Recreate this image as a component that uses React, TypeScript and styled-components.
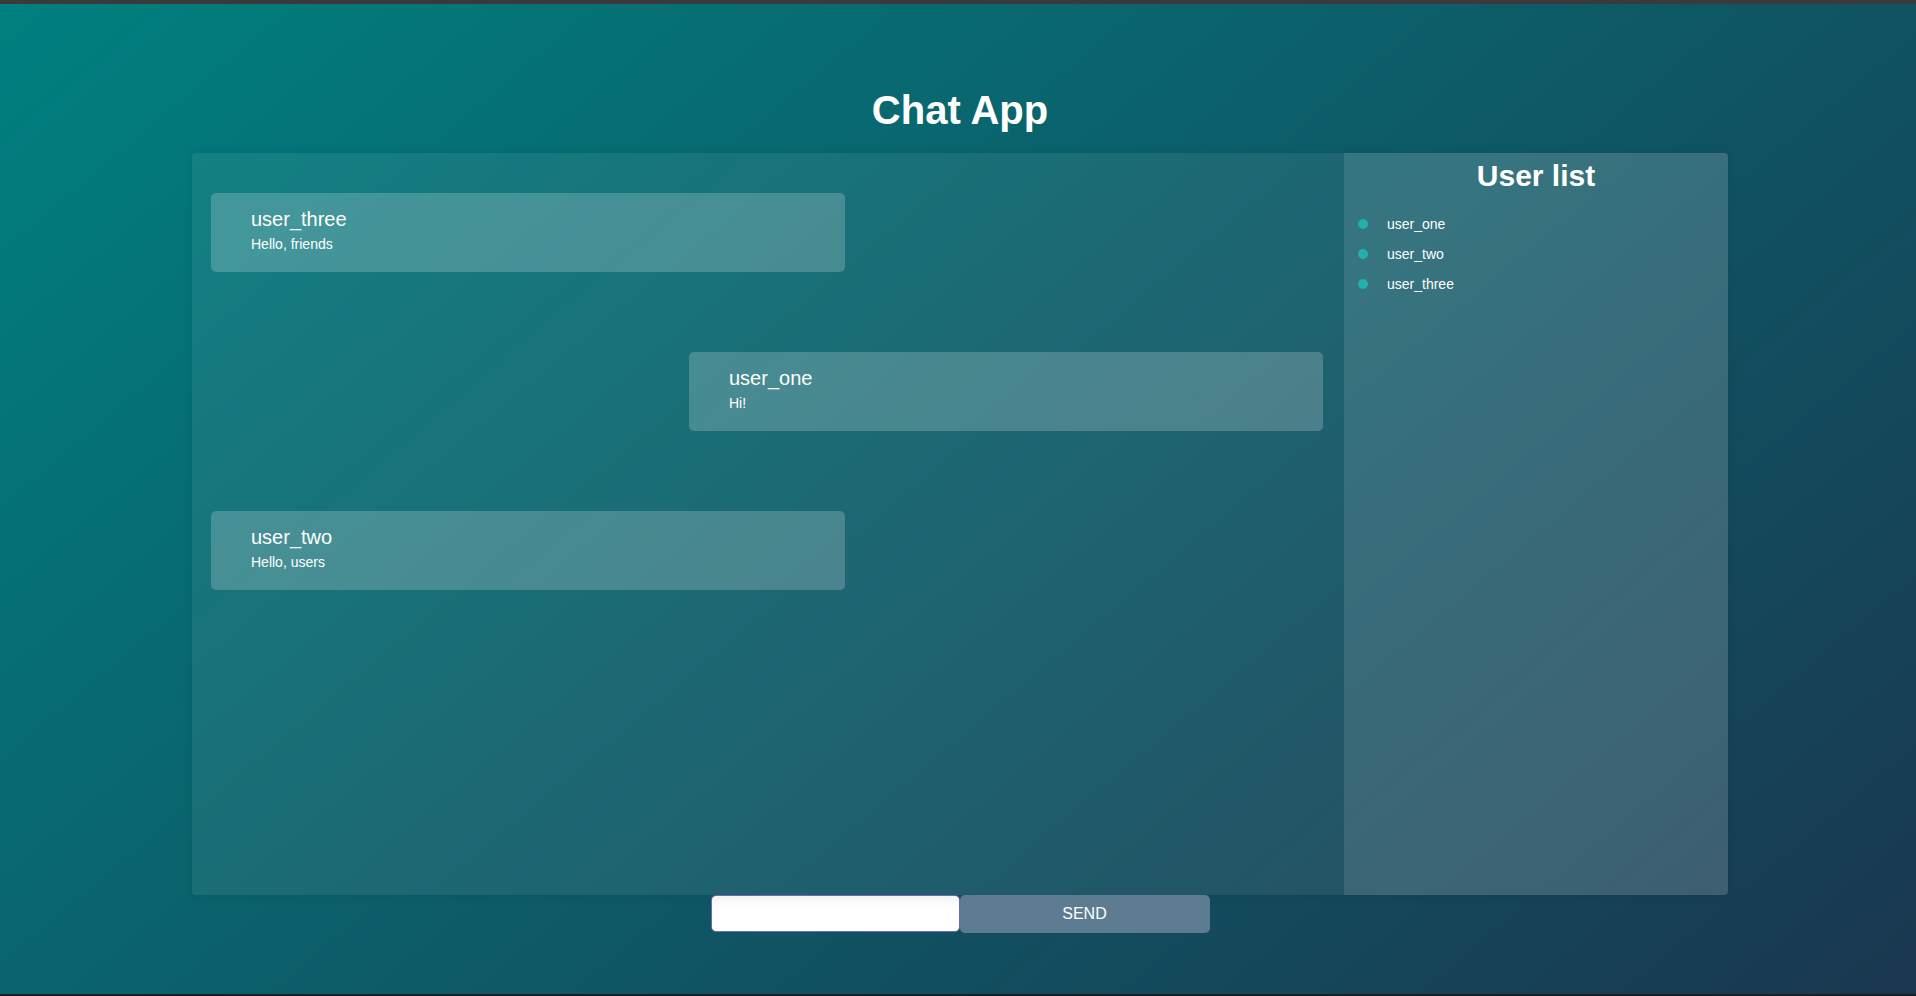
import * as React from "react";
import styled, { createGlobalStyle } from "styled-components";

const GlobalStyle = createGlobalStyle`
    * {
        box-sizing: border-box;
    }
    html, body {
        margin: 0;
        padding: 0;
    }
    body {
        font-family: "Liberation Sans", Arial, sans-serif;
        color: #fff;
    }
`;

type Message = { id: number; user: string; text: string; own?: boolean };

const messages: Message[] = [
    { id: 1, user: "user_three", text: "Hello, friends" },
    { id: 2, user: "user_one", text: "Hi!", own: true },
    { id: 3, user: "user_two", text: "Hello, users" },
];

const users = ["user_one", "user_two", "user_three"];

const Page = styled.div`
    height: 996px;
    border-top: 4px solid #3a3a3a;
    border-bottom: 2px solid #1e1e1e;
    background: linear-gradient(140deg, #008080, #1a3750);
    display: flex;
    flex-direction: column;
    align-items: center;
    padding: 83px 0 0 4px;
    overflow: hidden;
`;

const Title = styled.h1`
    margin: 0 0 20px;
    font-size: 40px;
    line-height: 46px;
    font-weight: 700;
`;

const Board = styled.div`
    width: 1536px;
    height: 742px;
    display: flex;
    background: rgba(255, 255, 255, 0.065);
    border-radius: 4px;
    overflow: hidden;
    box-shadow: 0 0 12px rgba(0, 0, 0, 0.08);
`;

const ChatPanel = styled.div`
    flex: 1;
    display: flex;
    flex-direction: column;
    gap: 80px;
    padding: 40px 21px 40px 19px;
`;

const Bubble = styled.div<{ $own?: boolean }>`
    width: 634px;
    align-self: ${({ $own }) => ($own ? "flex-end" : "flex-start")};
    background: rgba(255, 255, 255, 0.2);
    border-radius: 5px;
    padding: 15px 40px 20px;
`;

const Author = styled.div`
    font-size: 20px;
    line-height: 23px;
    margin-bottom: 5px;
`;

const Text = styled.div`
    font-size: 14px;
    line-height: 16px;
`;

const Sidebar = styled.aside`
    width: 384px;
    flex-shrink: 0;
    background: rgba(255, 255, 255, 0.11);
    padding-top: 5px;
`;

const SidebarTitle = styled.h2`
    margin: 0;
    text-align: center;
    font-size: 30px;
    line-height: 35px;
    font-weight: 700;
`;

const UserList = styled.ul`
    list-style: none;
    margin: 16px 0 0;
    padding: 0 0 0 14px;
`;

const UserItem = styled.li`
    display: flex;
    align-items: center;
    gap: 19px;
    font-size: 14px;
    line-height: 30px;
`;

const Dot = styled.span`
    width: 10px;
    height: 10px;
    border-radius: 50%;
    background: #20b2aa;
`;

const Form = styled.form`
    display: flex;
`;

const Input = styled.input`
    width: 249px;
    height: 37px;
    border: 1px solid #6c6cae;
    border-radius: 5px;
    background: linear-gradient(#f3f3f3, #fff 30%);
    font-family: inherit;
    font-size: 16px;
    padding: 0 8px;
    outline: none;
`;

const SendButton = styled.button`
    width: 250px;
    height: 38px;
    border: none;
    border-radius: 5px;
    background: #5d7c92;
    color: #fff;
    font-family: inherit;
    font-size: 16px;
    cursor: pointer;
`;

export default function App() {
    const [draft, setDraft] = React.useState("");
    return (
        <>
            <GlobalStyle />
            <Page>
                <Title>Chat App</Title>
                <Board>
                    <ChatPanel>
                        {messages.map((m) => (
                            <Bubble key={m.id} $own={m.own}>
                                <Author>{m.user}</Author>
                                <Text>{m.text}</Text>
                            </Bubble>
                        ))}
                    </ChatPanel>
                    <Sidebar>
                        <SidebarTitle>User list</SidebarTitle>
                        <UserList>
                            {users.map((u) => (
                                <UserItem key={u}>
                                    <Dot />
                                    {u}
                                </UserItem>
                            ))}
                        </UserList>
                    </Sidebar>
                </Board>
                <Form onSubmit={(e) => e.preventDefault()}>
                    <Input value={draft} onChange={(e) => setDraft(e.target.value)} />
                    <SendButton type="submit">SEND</SendButton>
                </Form>
            </Page>
        </>
    );
}
